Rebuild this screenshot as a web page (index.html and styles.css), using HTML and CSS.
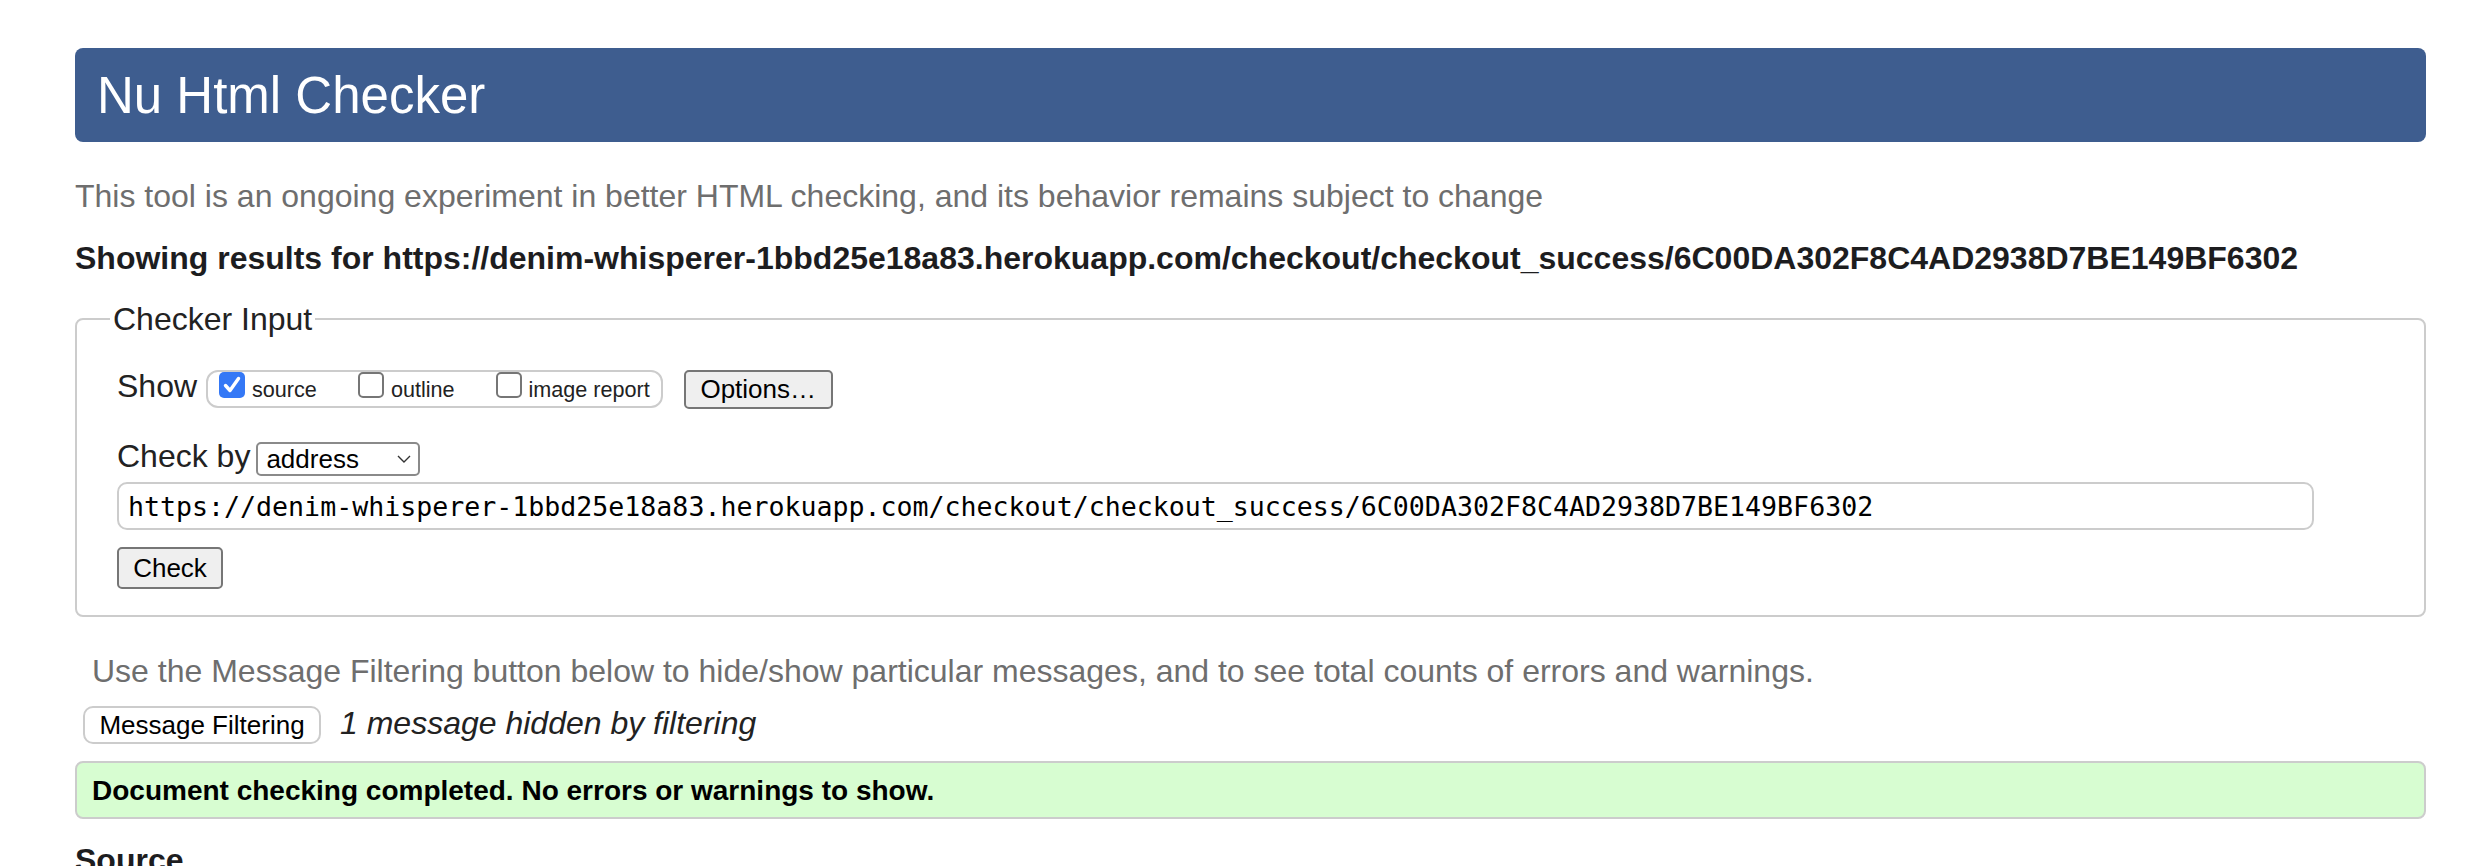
FILE: index.html
```html
<!DOCTYPE html>
<html lang="en">
<head>
<meta charset="utf-8">
<title>Nu Html Checker</title>
<link rel="stylesheet" href="styles.css">
</head>
<body>
<header class="banner"><h1 class="title">Nu Html Checker</h1></header>
<p class="intro">This tool is an ongoing experiment in better HTML checking, and its behavior remains subject to change</p>
<p class="showing">Showing results for https://denim-whisperer-1bbd25e18a83.herokuapp.com/checkout/checkout_success/6C00DA302F8C4AD2938D7BE149BF6302</p>
<form class="checker">
  <fieldset class="inputbox">
    <legend class="legend">Checker Input</legend>
    <div class="row show-row">
      <span class="label">Show</span>
      <span class="group">
        <label class="opt"><span class="cb cb-on"><svg width="26" height="26" viewBox="0 0 26 26"><path d="M6.5 13.5 L11 18.5 L19.5 6.5" fill="none" stroke="#fff" stroke-width="3.4" stroke-linecap="round" stroke-linejoin="round"/></svg></span><span class="opt-text">source</span></label>
        <label class="opt"><span class="cb"></span><span class="opt-text">outline</span></label>
        <label class="opt"><span class="cb"></span><span class="opt-text">image report</span></label>
      </span>
      <button type="button" class="btn btn-options">Options…</button>
    </div>
    <div class="row by-row">
      <span class="label">Check by</span>
      <span class="select"><span class="select-text">address</span><svg class="chev" width="14" height="8" viewBox="0 0 14 8"><path d="M1 1 L7 7 L13 1" fill="none" stroke="#333" stroke-width="1.4"/></svg></span>
    </div>
    <input class="url" type="text" value="https://denim-whisperer-1bbd25e18a83.herokuapp.com/checkout/checkout_success/6C00DA302F8C4AD2938D7BE149BF6302">
    <button type="button" class="btn btn-check">Check</button>
  </fieldset>
</form>
<p class="hint">Use the Message Filtering button below to hide/show particular messages, and to see total counts of errors and warnings.</p>
<div class="filter-row">
  <button type="button" class="btn-filter">Message Filtering</button>
  <em class="hidden-count">1 message hidden by filtering</em>
</div>
<div class="success">Document checking completed. No errors or warnings to show.</div>
<h2 class="source-heading">Source</h2>
</body>
</html>
```
FILE: styles.css
```css
* { box-sizing: border-box; }
html { overflow: hidden; }
html, body { margin: 0; }
body {
  font-family: "Liberation Sans", Arial, sans-serif;
  font-size: 32px;
  line-height: 37px;
  color: #222;
  background: #fff;
  padding: 48px 62px 0 75px;
}
.banner {
  background: #3e5d8f;
  border-radius: 8px;
  height: 94px;
  display: flex;
  align-items: center;
  padding-left: 22px;
}
.title {
  margin: 0;
  font-size: 51px;
  line-height: 1;
  font-weight: normal;
  color: #fff;
}
.intro {
  margin: 35.5px 0 0;
  color: #6e6e6e;
}
.showing {
  margin: 25px 0 0;
  font-weight: bold;
  color: #1d1d1f;
}
.checker { margin: 24px 0 0; }
.inputbox {
  margin: 0;
  min-width: 0;
  border: 2px solid #cccccc;
  border-radius: 8px;
  padding: 30px 40px 26px;
}
.legend {
  padding: 0 3px;
  margin-left: -7px;
  line-height: 37px;
}
.row {
  display: flex;
  align-items: flex-start;
}
.label { white-space: nowrap; }
.group {
  display: inline-flex;
  align-items: flex-start;
  margin: 2.5px 0 0 9px;
  height: 38px;
  border: 2px solid #cccccc;
  border-radius: 12px;
  padding: 0 11px;
  font-size: 21.6px;
  color: #222;
}
.opt {
  display: flex;
  align-items: flex-start;
  margin-right: 41px;
}
.opt:last-child { margin-right: 0; }
.cb {
  width: 26px;
  height: 26px;
  border: 2px solid #767676;
  border-radius: 5px;
  margin-right: 7px;
  background: #fff;
  flex: none;
}
.cb-on {
  background: #3478f6;
  border: none;
  display: flex;
}
.opt-text {
  padding-top: 5px;
  line-height: 26px;
  white-space: nowrap;
}
.btn {
  font-family: "Liberation Sans", Arial, sans-serif;
  font-size: 26px;
  color: #000;
  background: #efefef;
  border: 2px solid #767676;
  border-radius: 5px;
  padding: 0;
}
.btn-options {
  margin: 2.5px 0 0 21px;
  width: 149px;
  height: 39px;
}
.by-row { margin-top: 28.5px; }
.select {
  margin: 4.5px 0 0 6px;
  width: 164px;
  height: 34px;
  border: 2px solid #8a8a8a;
  border-radius: 5px;
  padding: 0 7px 0 8px;
  display: flex;
  align-items: center;
  justify-content: space-between;
  font-size: 26px;
  color: #000;
}
.chev { display: block; }
.url {
  display: block;
  margin-top: 6px;
  width: 2197px;
  height: 48px;
  border: 2px solid #cccccc;
  border-radius: 10px;
  padding: 0 9px;
  font-family: "DejaVu Sans Mono", "Liberation Mono", monospace;
  font-size: 26.6px;
  color: #000;
  background: #fff;
  outline: none;
}
.btn-check {
  display: block;
  margin-top: 17px;
  width: 106px;
  height: 42px;
}
.hint {
  margin: 35.5px 0 0 17px;
  color: #6e6e6e;
}
.filter-row {
  margin-top: 15px;
  display: flex;
  align-items: flex-start;
}
.btn-filter {
  margin: 1.5px 0 0 8px;
  width: 238px;
  height: 38px;
  border: 2px solid #cccccc;
  border-radius: 10px;
  background: #fff;
  font-family: "Liberation Sans", Arial, sans-serif;
  font-size: 26px;
  color: #000;
  padding: 0;
}
.hidden-count {
  margin-left: 19px;
  font-style: italic;
  color: #222;
}
.success {
  margin-top: 17px;
  height: 58px;
  border: 2px solid #cccccc;
  border-radius: 8px;
  background: #d7fdd1;
  padding-left: 15px;
  display: flex;
  align-items: center;
  font-size: 28px;
  font-weight: bold;
  color: #000;
}
.source-heading {
  margin: 22.5px 0 0;
  font-size: 32px;
  line-height: 37px;
  font-weight: bold;
  color: #1d1d1f;
}
```
